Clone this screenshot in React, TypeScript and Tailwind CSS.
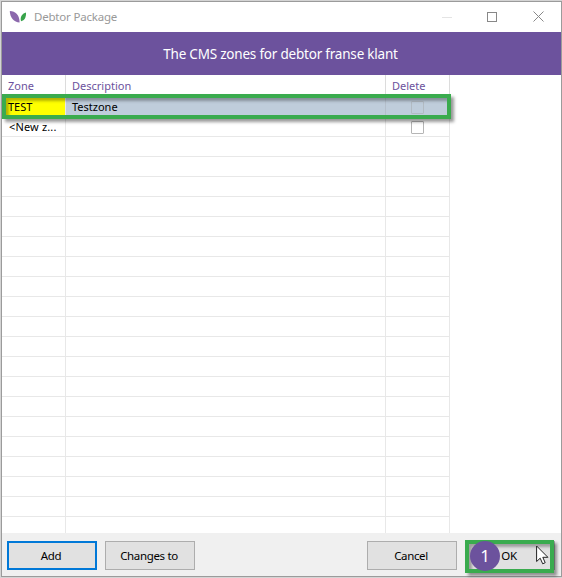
import type { ReactNode } from "react";

type Zone = { zone: string; description: string; selected?: boolean };

const zones: Zone[] = [
  { zone: "TEST", description: "Testzone", selected: true },
  { zone: "<New z...", description: "" },
];
const emptyRows = Array.from({ length: 20 }, (_, i) => i);

function Logo() {
  return (
    <svg width="18" height="14" viewBox="0 0 18 14" className="-mt-px shrink-0">
      <path d="M.8 1C6.500 1 10.500 5 10.600 12.500C5 12 1 8 .8 1Z" fill="#8b68ac" />
      <path d="M17 2.500C13.500 3.500 10.700 6.500 12 11.200C15.500 10.500 17.300 7.500 17 2.500Z" fill="#37a34a" />
    </svg>
  );
}

function TitleBar() {
  return (
    <header className="flex h-[30px] shrink-0 items-center bg-white pl-[7px]">
      <Logo />
      <span className="ml-[7px] text-[11.5px] leading-4 tracking-[-0.2px] text-[#999]">Debtor Package</span>
      <div className="mr-[17px] ml-auto flex items-center text-[#888]">
        <svg width="10" height="10" viewBox="0 0 10 10">
          <path d="M0 5.5H10" stroke="#e4e4e4" />
        </svg>
        <svg width="10" height="10" viewBox="0 0 10 10" className="ml-[35px]">
          <rect x=".5" y=".5" width="9" height="9" fill="none" stroke="currentColor" />
        </svg>
        <svg width="11" height="11" viewBox="0 0 11 11" className="-mt-px ml-[36px]">
          <path d="M.5.5L10.500 10.500M10.500.5L.5 10.500" fill="none" stroke="currentColor" />
        </svg>
      </div>
    </header>
  );
}

function Row({ zone = "", description = "", selected = false, checkbox = false }) {
  return (
    <div
      className={`grid h-5 shrink-0 grid-cols-[64px_320px_64px] border-b border-[#e8e8e8] text-[11px] leading-[19px] text-black ${
        selected ? "bg-[#bfcddb]" : "bg-white"
      }`}
    >
      <div
        className={`border-r border-[#e8e8e8] whitespace-nowrap ${
          selected ? "bg-[#ffff00] pl-[6px]" : "pl-[7px] tracking-[0.15px]"
        }`}
      >
        {zone}
      </div>
      <div className={`border-r pl-[6px] whitespace-nowrap ${selected ? "border-[#b4bfcb]" : "border-[#e8e8e8]"}`}>
        {description}
      </div>
      <div className="border-r border-[#e8e8e8] pt-1 pl-[25px]">
        {checkbox && (
          <div className={`size-[13px] rounded-[1px] border ${selected ? "border-[#b2bbc3]" : "border-[#b5b5b5] bg-white"}`} />
        )}
      </div>
    </div>
  );
}

function ZoneTable() {
  return (
    <main className="flex h-[458px] w-[448px] shrink-0 flex-col overflow-hidden">
      <div className="grid h-[22px] shrink-0 grid-cols-[64px_320px_64px] border-b border-[#e8e8e8] text-[11px] leading-[22px] text-[#6c529d]">
        <div className="border-r border-[#dcdcdc] pl-[6px]">Zone</div>
        <div className="border-r border-[#dcdcdc] pl-[6px]">Description</div>
        <div className="border-r border-[#dcdcdc] pl-[6px]">Delete</div>
      </div>
      {zones.map((z) => (
        <Row key={z.zone} {...z} checkbox />
      ))}
      {emptyRows.map((i) => (
        <Row key={i} />
      ))}
    </main>
  );
}

function Button({ children, focused = false, className = "" }: { children?: ReactNode; focused?: boolean; className?: string }) {
  return (
    <button
      className={`flex h-[29px] w-[90px] items-center justify-center bg-[#e1e1e1] pr-[2px] text-[11.5px] leading-4 tracking-[-0.35px] text-black ${
        focused ? "border-2 border-[#0078d7]" : "border border-[#adadad]"
      } ${className}`}
    >
      {children}
    </button>
  );
}

export default function App() {
  return (
    <div className="relative h-[578px] w-[562px] overflow-hidden bg-[#d4d4d4] pt-px pl-px font-['Noto_Sans','Open_Sans',sans-serif]">
      <div className="flex h-[576px] w-[561px] flex-col border border-[#9b9b9b] bg-white">
        <TitleBar />
        <h1 className="flex h-[43px] shrink-0 items-center justify-center bg-[#6c529d] pt-px pr-[2px] text-[13.5px] leading-5 tracking-[-0.21px] text-white">
          The CMS zones for debtor franse klant
        </h1>
        <ZoneTable />
        <footer className="flex flex-1 bg-[#f0f0f0] pt-2 pl-[5px]">
          <Button focused>Add</Button>
          <Button className="ml-2">Changes to</Button>
          <Button className="mr-2 ml-auto">Cancel</Button>
          <Button className="mr-[6px]">OK</Button>
        </footer>
      </div>

      <div className="absolute top-[94px] left-[2px] h-[25px] w-[449px] border-4 border-[#3aab4e] shadow-[3px_3px_3px_rgba(0,0,0,0.4),inset_3px_3px_3px_rgba(0,0,0,0.3)]" />
      <div className="absolute top-[540px] left-[465px] h-[33px] w-[89px] border-4 border-[#3aab4e] shadow-[3px_3px_3px_rgba(0,0,0,0.4),inset_3px_3px_3px_rgba(0,0,0,0.3)]" />
      <div className="absolute top-[541px] left-[470px] flex size-[30px] items-center justify-center rounded-full bg-[#6c529d] pb-[2px] text-[17px] leading-none text-white">
        1
      </div>
      <svg className="absolute top-[545px] left-[536px]" width="13" height="20" viewBox="0 0 13 20">
        <path d="M.6 1V16.500L4.200 13.200L6.700 18.800L9.200 17.700L6.800 12.300H11.900Z" fill="#fff" stroke="#222" strokeWidth="1" />
      </svg>
    </div>
  );
}
